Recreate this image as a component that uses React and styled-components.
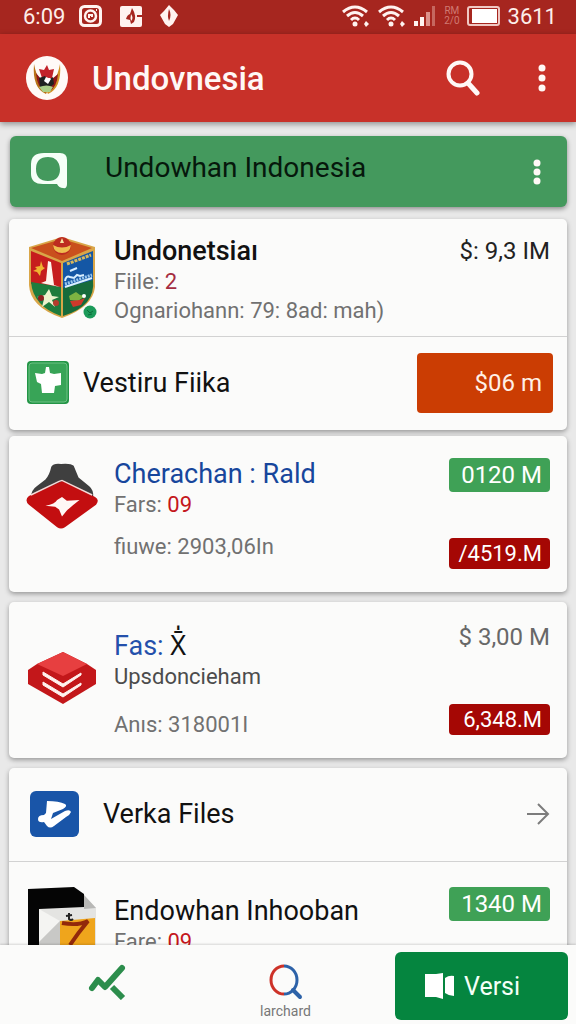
import React from 'react';
import styled, { createGlobalStyle } from 'styled-components';

const GlobalStyle = createGlobalStyle`
* {
  box-sizing: border-box;
}
body {
  margin: 0;
  background: #e9e9e9;
  font-family: Roboto, "Liberation Sans", sans-serif;
}
button {
  border: 0;
  padding: 0;
  background: none;
  color: inherit;
  font-family: inherit;
  cursor: pointer;
}
a {
  color: inherit;
  text-decoration: none;
}
svg {
  display: block;
}
`;

const Screen = styled.div`
  display: flex;
  flex-direction: column;
  height: 100vh;
`;

const StatusBar = styled.div`
  display: flex;
  align-items: center;
  justify-content: space-between;
  flex: none;
  height: 34px;
  padding: 0 19px 2px 23px;
  background: #a6261f;
  color: #fdeeea;
  font-size: 22px;
`;

const StatusGroup = styled.div`
  display: flex;
  align-items: center;
  gap: ${(props) => props.$gap}px;
`;

const Carrier = styled.span`
  color: #d07a72;
  font-size: 10px;
  line-height: 10px;
  text-align: center;
`;

const AppBar = styled.header`
  position: relative;
  display: flex;
  align-items: center;
  flex: none;
  height: 88px;
  padding: 0 24px 0 26px;
  background: #c83129;
  color: #fff8f6;
  box-shadow: 0 2px 6px rgba(0, 0, 0, 0.4);
`;

const AppTitle = styled.h1`
  flex: 1;
  margin: 0 0 0 24px;
  font-size: 33px;
  font-weight: 500;
`;

const Tools = styled.div`
  display: flex;
  gap: 52px;
`;

const IconButton = styled.button`
  display: flex;
  align-items: center;
  justify-content: center;
  min-width: 20px;
  height: 44px;
`;

const Content = styled.main`
  flex: 1;
  min-height: 0;
  padding: 14px 9px 0;
  overflow-y: auto;
  scrollbar-width: none;
`;

const Banner = styled.section`
  display: flex;
  align-items: center;
  height: 71px;
  margin: 0 0 12px 1px;
  padding: 0 20px;
  border-radius: 6px;
  background: #44995d;
  box-shadow: 0 2px 5px rgba(0, 0, 0, 0.4);
`;

const BannerTitle = styled.h2`
  flex: 1;
  margin: 0 0 8px 37px;
  color: #06180c;
  font-size: 28px;
  font-weight: 400;
`;

const Card = styled.section`
  margin-bottom: ${(props) => (props.$tight ? 6 : 10)}px;
  border-radius: 5px;
  background: #fbfbfa;
  box-shadow: 0 2px 5px rgba(0, 0, 0, 0.35);
`;

const Entry = styled.article`
  display: grid;
  grid-template-columns: 72px 1fr auto;
  column-gap: 16px;
  min-height: ${(props) => props.$height}px;
  padding: ${(props) => props.$top}px 17px 0 17px;
`;

const EntryIcon = styled.div`
  display: flex;
  justify-content: center;
  align-items: flex-start;
  padding-top: ${(props) => props.$drop || 0}px;
`;

const EntryText = styled.div`
  padding-top: ${(props) => (props.$low ? 8 : 0)}px;
`;

const Name = styled.h3`
  margin: 0;
  color: ${(props) => props.$color || '#111'};
  font-size: 27px;
  font-weight: ${(props) => props.$weight || 400};
  line-height: 32px;
  white-space: nowrap;
`;

const Meta = styled.p`
  margin: ${(props) => props.$space || 0}px 0 0;
  color: ${(props) => (props.$dark ? '#4c4c4c' : '#717171')};
  font-size: 22px;
  line-height: 29px;
  white-space: nowrap;
`;

const Count = styled.span`
  color: ${(props) => props.$color || '#c4161c'};
`;

const Glyph = styled.span`
  color: #111;
  font-family: "Noto Sans", sans-serif;
`;

const Figures = styled.div`
  display: flex;
  flex-direction: column;
  align-items: flex-end;
`;

const Price = styled.span`
  color: ${(props) => (props.$dark ? '#222' : '#686868')};
  font-size: 24px;
  line-height: 32px;
  white-space: nowrap;
`;

const Badge = styled.span`
  display: flex;
  align-items: center;
  justify-content: flex-end;
  width: 101px;
  height: ${(props) => (props.$red ? 31 : 34)}px;
  margin-top: ${(props) => props.$space || 0}px;
  padding-right: 8px;
  border-radius: 4px;
  background: ${(props) => (props.$red ? '#a50704' : '#3fa156')};
  color: #fff;
  font-size: ${(props) => (props.$red ? 22 : 24)}px;
  white-space: nowrap;
`;

const Action = styled.div`
  display: flex;
  align-items: center;
  gap: ${(props) => props.$gap}px;
  height: 93px;
  padding: 0 ${(props) => props.$right}px 2px ${(props) => props.$left}px;
`;

const Grow = styled.div`
  flex: 1;
`;

const Divider = styled.hr`
  height: 1px;
  margin: 0;
  border: 0;
  background: #d2d2d2;
`;

const PayButton = styled.button`
  width: 136px;
  height: 60px;
  padding-right: 11px;
  border-radius: 4px;
  background: #cb3d03;
  color: #fff0e6;
  font-size: 24px;
  text-align: right;
`;

const BottomNav = styled.nav`
  position: relative;
  display: grid;
  grid-template-columns: 1fr 1fr auto;
  flex: none;
  height: 79px;
  padding: 7px 8px 4px 17px;
  background: #fbfbfa;
  box-shadow: 0 -1px 2px rgba(0, 0, 0, 0.15);
`;

const Tab = styled.a`
  display: flex;
  flex-direction: column;
  align-items: center;
  gap: 2px;
  padding-top: 12px;
  color: #777;
  font-size: 14px;
  line-height: 18px;
`;

const VersionButton = styled.button`
  display: flex;
  align-items: center;
  gap: 9px;
  width: 173px;
  margin-left: 20px;
  padding-left: 29px;
  border-radius: 6px;
  background: #05853f;
  color: #f4fff8;
  font-size: 25px;
`;

const Wifi = () => (
  <svg width="28" height="22" viewBox="0 0 28 22" fill="none" stroke="#fff3f0" strokeWidth="3">
    <path d="M1 7Q13 -3 25 7" />
    <path d="M5 11Q13 4 21 11" />
    <path d="M9 15Q13 11 17 15" />
    <circle cx="13" cy="19" r="2.5" fill="#fff3f0" stroke="none" />
    <path d="M24 16l3 3-3 3-2-3z" fill="#fff3f0" stroke="none" />
  </svg>
);

const Signal = () => (
  <svg width="24" height="22" viewBox="0 0 24 22">
    <path d="M1 16h4v5H1zM7 12h4v9H7z" fill="#fff3f0" />
    <path d="M13 7h4v14h-4z" fill="#dd918a" />
    <path d="M19 1h3v20h-3z" fill="#c6675f" />
  </svg>
);

const Battery = () => (
  <svg width="34" height="20" viewBox="0 0 34 20">
    <rect x="1" y="1" width="31" height="18" rx="2" fill="none" stroke="#f0c8c3" strokeWidth="2" />
    <path d="M5 3h25v14H5z" fill="#fff" />
  </svg>
);

const CameraMark = () => (
  <svg width="23" height="22" viewBox="0 0 23 22" fill="none" stroke="#fff3f0">
    <rect x="1.5" y="1.5" width="20" height="19" rx="4" strokeWidth="3" />
    <circle cx="11.5" cy="11" r="5.5" strokeWidth="2.5" />
    <path d="M10 13v-3h3v2" strokeWidth="2" />
    <path d="M17 5h1" strokeWidth="2" />
  </svg>
);

const FlameMark = () => (
  <svg width="22" height="21" viewBox="0 0 22 21">
    <rect width="22" height="21" rx="2" fill="#fff3f0" />
    <path d="M12 2q5 8 2 14l-3 2-1-4-4-1q1-4 4-5z" fill="#a6261f" />
    <path d="M11 8q3 4 0 7-1-3 0-7z" fill="#fff3f0" />
    <path d="M17 10h5" stroke="#a6261f" strokeWidth="2" />
  </svg>
);

const DropMark = () => (
  <svg width="18" height="24" viewBox="0 0 18 24">
    <path d="M9 1l5 5 4 5-5 9-4 3-4-3-5-9 4-4z" fill="#fff3f0" />
    <path d="M9 5q3 6 0 12-2-5 0-12z" fill="#a6261f" />
  </svg>
);

const Garuda = () => (
  <svg width="42" height="44" viewBox="0 0 42 44">
    <ellipse cx="21" cy="22" rx="21" ry="22" fill="#fffaf7" />
    <path d="M8 8q-2 24 12 30l2-4Q12 28 8 8z" fill="#b97318" />
    <path d="M34 8q2 24-12 30l-2-4q10-6 14-26z" fill="#d19225" />
    <path d="M10 17q1 15 10 19h3q8-5 9-18l-6 5H15z" fill="#8e1717" />
    <path d="M13 13l5 1 3-5 2 5 5-1-2 9H16z" fill="#c2232a" />
    <path d="M13 22l6-2 3 4 5-3 1 7-6 5-8-2z" fill="#1f2220" />
    <path d="M20 21l5 2-3 5-4-3z" fill="#fff" />
    <path d="M13 31q8-3 14 0l-3 5H17z" fill="#a9cf86" />
  </svg>
);

const Search = () => (
  <svg width="34" height="36" viewBox="0 0 34 36" fill="none" stroke="#fff8f6">
    <circle cx="14" cy="14" r="11.5" strokeWidth="4" />
    <path d="M22 23l9 10" strokeWidth="5" strokeLinecap="round" />
  </svg>
);

const Dots = ({ step }) => (
  <svg width="8" height="30" viewBox="0 0 8 30" fill="#fff8f6">
    <circle cx="4" cy={15 - step} r="3.5" />
    <circle cx="4" cy="15" r="3.5" />
    <circle cx="4" cy={15 + step} r="3.5" />
  </svg>
);

const Bubble = () => (
  <svg width="38" height="40" viewBox="0 0 38 40">
    <path
      d="M14 1h16q7 0 7 7v24q0 5-4 4-4 0-6-4H13Q1 32 1 22V12Q1 1 14 1zM18 5Q6 5 6 17t12 12 12-12S30 5 18 5z"
      fill="#f6fff8"
      fillRule="evenodd"
    />
  </svg>
);

const Shield = () => (
  <svg width="70" height="86" viewBox="0 0 70 86">
    <path d="M35 2l33 10v40q-2 20-33 31Q3 72 2 50V12z" fill="#d9a648" />
    <path d="M35 4l30 9-30 13L4 13z" fill="#c9501d" />
    <path d="M4 16l30 12v25L4 49z" fill="#c61d1d" />
    <path d="M4 47l30 5v29Q6 71 4 47z" fill="#1e7c3d" />
    <path d="M36 28l30-12v34L36 55z" fill="#1457a5" />
    <path d="M36 53l30-8q3 26-30 36z" fill="#176b3b" />
    <circle cx="35" cy="11" r="9" fill="#bd2c20" />
    <path d="M26 10q9 5 18 0-1 8-9 8t-9-8z" fill="#efbd4f" />
    <path d="M33 8l2-5 2 5z" fill="#f6e3a0" />
    <path d="M21 26l3 1 3 23 6 2-19-4 5-2z" fill="#fff5ed" />
    <path d="M8 32l5-1 1-5 2 6 2 1-4 3-1 5-3-4-4-1 4-2z" fill="#efb330" />
    <path d="M40 29l24-9" stroke="#dab85b" strokeWidth="3" strokeDasharray="3 1" />
    <path d="M43 36l7-3M38 46q1-6 5-4l4 1 3-3 3 1 4-1M38 52l27-9" stroke="#d9efff" strokeWidth="2" fill="none" />
    <path d="M38 49l27-9" stroke="#9bc8ee" strokeWidth="3" strokeDasharray="2 1" />
    <path d="M22 54l3 7 7 1-7 3 3 7-6-5-7 5 2-8-7-2 8-2z" fill="#edf2cd" />
    <circle cx="14" cy="63" r="3" fill="#8c2020" />
    <circle cx="29" cy="68" r="3" fill="#b43c2c" />
    <path d="M42 61l7-4 4 3 5 1-7 5-8-1z" fill="#7cb342" />
    <path d="M43 66l10-1 5-2-4 7-8 2z" fill="#cf392b" />
    <circle cx="57" cy="61" r="2" fill="#fff" />
    <circle cx="63" cy="77" r="6.5" fill="#1b9a59" />
    <path d="M60 75l3 3 3-2M61 80l4-1" stroke="#0c6c39" fill="none" />
  </svg>
);

const ShirtMark = () => (
  <svg width="42" height="43" viewBox="0 0 42 43">
    <rect width="42" height="43" rx="4" fill="#239546" />
    <rect x="2" y="2" width="38" height="39" rx="3" fill="#38a457" stroke="#6fc285" />
    <path d="M8 12l7 1 3-1 1-6h3l1 6 4 1 7-1v12l-6 1-1 7H15l-1-9-4-2z" fill="#fff" />
  </svg>
);

const HoodMark = () => (
  <svg width="74" height="68" viewBox="0 0 74 68">
    <path d="M26 4q2-4 10-3 10-1 13 2l5 12 11 9q5 4 4 12H5q0-8 6-12l9-7q4-4 6-13z" fill="#3f3f3f" />
    <path d="M3 34l33-15q2-1 4 0l31 16q5 3 1 8L40 66q-4 3-8 0L3 43q-5-5 0-9z" fill="#c30e10" />
    <path d="M5 33l29-14 3-1 31 15" fill="none" stroke="#f7dad8" strokeWidth="1.5" />
    <path d="M20 44q10-2 12-6l5-3 5 4 13-1q-8 6-13 11l-5 6-3-7-4-3z" fill="#fff8f5" />
  </svg>
);

const StackMark = () => (
  <svg width="70" height="54" viewBox="0 0 70 54">
    <path d="M10 13L36 1l24 12 9 6v14L36 53 1 33V19z" fill="#c3171a" />
    <path d="M10 13L36 1l24 12-24 12z" fill="#e73f40" />
    <path d="M16 21l20 12 18-11v2L36 36 16 24zM16 31l20 12 18-11v2L36 46 16 34z" fill="#fff2ef" stroke="#fff2ef" strokeLinejoin="round" />
  </svg>
);

const VerifyMark = () => (
  <svg width="49" height="46" viewBox="0 0 49 46">
    <rect width="49" height="46" rx="6" fill="#1955a8" />
    <path d="M17 10q12 0 18 3 3 2-2 5l-10 4-2 6 14-8q5-2 6 1-1 3-5 5L24 35q-4 3-7 0l-3-4q-6 1-6-3t6-4l2-2z" fill="#fff" />
  </svg>
);

const Arrow = () => (
  <svg width="24" height="24" viewBox="0 0 24 24" fill="none" stroke="#7c7c7c" strokeWidth="2">
    <path d="M1 12h20M12 2l10 10-10 10" />
  </svg>
);

const BoxMark = () => (
  <svg width="68" height="70" viewBox="0 0 68 70">
    <path d="M0 2l46-2 10 7v63H9L0 58z" fill="#050505" />
    <path d="M56 8l12 13v49H11V22l45-2z" fill="#e4e4e2" />
    <path d="M11 22l21 12-18 18-3 4z" fill="#f4f4f2" />
    <path d="M11 55l21-21v36H11z" fill="#c8c8c6" />
    <path d="M56 8l12 13-12 1z" fill="#b8b8b6" />
    <path d="M32 34l35-3v39H32z" fill="#efa51c" />
    <path d="M34 36q16 3 26-2-10 12-18 24" fill="none" stroke="#92290b" strokeWidth="4" />
    <path d="M41 26v6q2 2 4 0M38 29l6-1" fill="none" stroke="#222" strokeWidth="2" />
  </svg>
);

const TrendMark = () => (
  <svg width="38" height="36" viewBox="0 0 38 36" fill="none" stroke="#2c8d4c" strokeLinejoin="round">
    <path d="M4 24l6-8 7 7L34 4" strokeWidth="6" strokeLinecap="round" />
    <path d="M24 23l11 11" strokeWidth="6" />
  </svg>
);

const LensMark = () => (
  <svg width="34" height="36" viewBox="0 0 34 36" fill="none" strokeWidth="3">
    <path d="M15 2a13 14 0 0 0 0 28" stroke="#cd3228" />
    <path d="M15 2a13 14 0 0 1 0 28" stroke="#2d62a8" />
    <path d="M24 26l7 7" stroke="#2d62a8" strokeWidth="4" strokeLinecap="round" />
  </svg>
);

const BookMark = () => (
  <svg width="31" height="28" viewBox="0 0 31 28" fill="#fff">
    <path d="M1 2h11l7-1v26l-7-2H1zM21 6q4-3 9-2v20q-5 0-9-3z" />
  </svg>
);

function App() {
  return (
    <Screen>
      <GlobalStyle />
      <StatusBar>
        <StatusGroup $gap={14}>
          <span>6:09</span>
          <StatusGroup $gap={18}>
            <CameraMark />
            <FlameMark />
            <DropMark />
          </StatusGroup>
        </StatusGroup>
        <StatusGroup $gap={7}>
          <StatusGroup $gap={8}>
            <Wifi />
            <Wifi />
          </StatusGroup>
          <Signal />
          <Carrier>RM<br />2/0</Carrier>
          <Battery />
          <span>3611</span>
        </StatusGroup>
      </StatusBar>

      <AppBar>
        <Garuda />
        <AppTitle>Undovnesia</AppTitle>
        <Tools>
          <IconButton aria-label="Search"><Search /></IconButton>
          <IconButton aria-label="More"><Dots step={10} /></IconButton>
        </Tools>
      </AppBar>

      <Content>
        <Banner>
          <Bubble />
          <BannerTitle>Undowhan Indonesia</BannerTitle>
          <IconButton aria-label="Banner options"><Dots step={9} /></IconButton>
        </Banner>

        <Card $tight>
          <Entry $height={117} $top={16}>
            <EntryIcon><Shield /></EntryIcon>
            <EntryText>
              <Name $weight={500}>Undonetsiaı</Name>
              <Meta>Fiile: <Count $color="#a52c40">2</Count></Meta>
              <Meta>Ognariohann: 79: 8ad: mah)</Meta>
            </EntryText>
            <Figures><Price $dark>$: 9,3 IM</Price></Figures>
          </Entry>
          <Divider />
          <Action $left={18} $right={14} $gap={14}>
            <ShirtMark />
            <Name>Vestiru Fiika</Name>
            <Grow />
            <PayButton>$06 m</PayButton>
          </Action>
        </Card>

        <Card>
          <Entry $height={156} $top={22}>
            <EntryIcon $drop={4}><HoodMark /></EntryIcon>
            <EntryText>
              <Name $color="#17469c"><a href="#cherachan">Cherachan : Rald</a></Name>
              <Meta>Fars: <Count>09</Count></Meta>
              <Meta $space={13}>fiuwe: 2903,06In</Meta>
            </EntryText>
            <Figures>
              <Badge>0120 M</Badge>
              <Badge $red $space={46}>/4519.M</Badge>
            </Figures>
          </Entry>
        </Card>

        <Card>
          <Entry $height={156} $top={19}>
            <EntryIcon $drop={30}><StackMark /></EntryIcon>
            <EntryText $low>
              <Name $color="#2450ab"><a href="#fas">Fas:</a> <Glyph>X̄̍</Glyph></Name>
              <Meta $dark>Upsdoncieham</Meta>
              <Meta $space={19}>Anıs: 318001I</Meta>
            </EntryText>
            <Figures>
              <Price>$ 3,00 M</Price>
              <Badge $red $space={51}>6,348.M</Badge>
            </Figures>
          </Entry>
        </Card>

        <Card>
          <Action as="a" href="#files" $left={21} $right={17} $gap={24}>
            <VerifyMark />
            <Name>Verka Files</Name>
            <Grow />
            <Arrow />
          </Action>
          <Divider />
          <Entry $height={117} $top={25}>
            <EntryIcon><BoxMark /></EntryIcon>
            <EntryText $low>
              <Name>Endowhan Inhooban</Name>
              <Meta>Fare: <Count>09</Count></Meta>
            </EntryText>
            <Figures><Badge>1340 M</Badge></Figures>
          </Entry>
        </Card>
      </Content>

      <BottomNav>
        <Tab href="#activity" aria-label="Activity"><TrendMark /></Tab>
        <Tab href="#archive"><LensMark />larchard</Tab>
        <VersionButton><BookMark />Versi</VersionButton>
      </BottomNav>
    </Screen>
  );
}

export default App;
